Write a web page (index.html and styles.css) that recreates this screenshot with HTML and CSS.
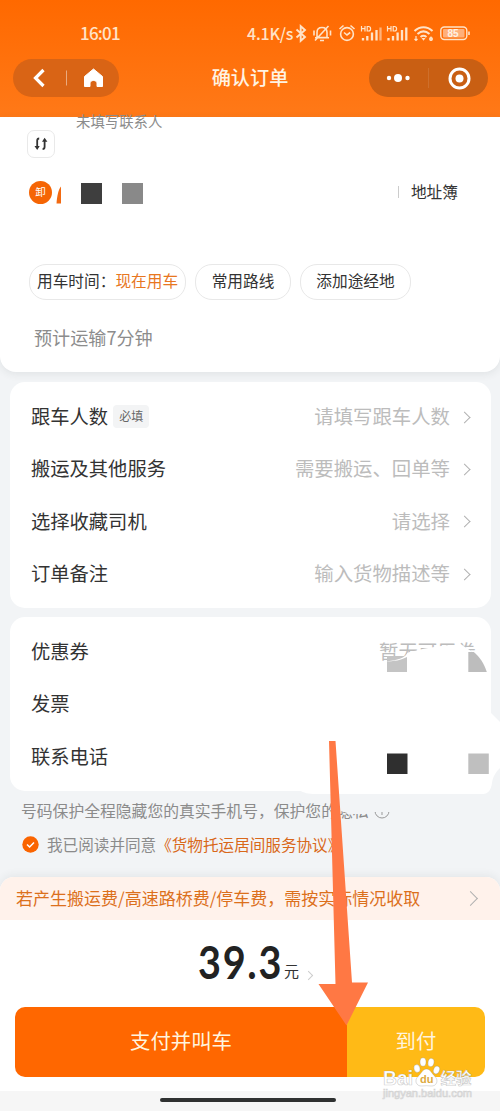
FILE: index.html
```
<!DOCTYPE html>
<html lang="zh-CN">
<head>
<meta charset="utf-8">
<title>确认订单</title>
<link rel="stylesheet" href="styles.css">
</head>
<body>
<div class="app">
  <header class="header">
    <div class="status">
      <span class="clock">16:01</span>
      <span class="speed">4.1K/s</span>
      <svg class="status-icons" width="176" height="20" viewBox="295 23 176 20" fill="none" stroke="#ffe3c8" stroke-width="1.6">
        <path stroke-width="1.900" d="M296.500 29.500 305 37l-4.300 3.800V26.200L305 30l-8.500 7.500"/>
        <path d="M317 37.500v-5c0-3 2-5 5-5s5 2 5 5v5zM315 37.800h14M320 40.500h4M328.500 26 315 40.500M314 30.500v5M330.500 30.500v5"/>
        <circle cx="347" cy="34" r="6.400"/><path d="m344 32.500 3 2.500 3.200-2.500M339.500 29l4-3.500M354.500 29l-4-3.500"/>
        <g stroke-width="2.300"><path d="M363 38v2.500M367.300 36v4.500M372 32.500v8M376.500 30v10.500"/><path stroke="#ffb27a" d="M380.500 27.500v13"/><path d="M388.500 38v2.500M393 36v4.500M397.600 32.500v8M402 30v10.500M406.300 27.500v13"/></g>
        <path stroke-width="1.200" d="M361.500 26v5.500M365 26v5.500M361.500 28.700h3.500M367.200 26.500v4.500h1.300c2.800 0 2.800-4.500 0-4.500zM387.500 26v5.500M391 26v5.500M387.500 28.700h3.500M393.200 26.500v4.500h1.300c2.800 0 2.800-4.500 0-4.500z"/>
        <path stroke-width="2" d="M414.500 31c5.500-5 12.500-5 18 0M417.500 34c3.700-3.200 8.300-3.200 12 0M420.500 37c2-1.600 4-1.600 6 0"/>
        <path fill="#ffe3c8" stroke="none" d="m421.500 38 4 0-2 2.800z"/><path stroke-width="1.200" d="M416 36v4.500M414.500 39l1.500 1.500 1.500-1.500M431 36.500v4.500"/><circle cx="431" cy="39" r="1.200"/>
        <rect x="440.800" y="27" width="26" height="12.500" rx="3.500" stroke-width="1.400"/><rect x="443" y="29" width="21.500" height="8.500" rx="1" fill="#ffb07a" stroke="none"/><path d="M469 31.500v3.500"/>
        <text class="battery-text" x="447.500" y="37">85</text>
      </svg>
    </div>
    <div class="nav">
      <div class="pill pill-left">
        <svg width="106" height="38" viewBox="13 59 106 38" fill="none" stroke="#fff">
          <path d="m43.500 70-8 8 8 8" stroke-width="3.200"/><path d="M66.500 70.500v15" stroke="#fff" opacity=".45"/>
          <path fill="#fff" stroke="#fff" stroke-linejoin="round" d="M84.500 76.500 93.500 69l9 7.500v10H97V83c0-1.500-1.500-2.500-3.500-2.500S90 81.500 90 83v3.500h-5.500z"/>
        </svg>
      </div>
      <h1 class="title">确认订单</h1>
      <div class="pill pill-right">
        <svg width="119" height="38" viewBox="369 59 119 38" fill="#fff">
          <circle cx="389" cy="78" r="2.200"/><circle cx="398" cy="78" r="4"/><circle cx="407.500" cy="78" r="2.200"/>
          <path d="M428.500 68v20" stroke="#fff" opacity=".1"/>
          <circle cx="459.500" cy="78.500" r="9.500" fill="none" stroke="#fff" stroke-width="3"/><circle cx="459.500" cy="78.500" r="4"/>
        </svg>
      </div>
    </div>
  </header>

  <section class="route">
    <p class="contact">未填写联系人</p>
    <div class="swap">
      <svg width="16" height="14" viewBox="0 0 16 14" fill="none" stroke="#333" stroke-width="1.800"><path d="M6.200 1.500c-1.400 0-2 .5-2 2v7M9.600 12c1.400 0 2-.5 2-2V3.500"/><path fill="#333" stroke="none" d="M1.500 9h5.200l-2.500 4zM9 4.700l2.600-4 2.800 4z"/></svg>
    </div>
    <div class="unload">
      <span class="unload-badge">卸</span>
      <svg width="6" height="18" viewBox="0 0 6 18"><path fill="#f26a12" d="M.5 17.500C1 11 2 4 5 .5v17z"/></svg>
      <i class="block block-dark"></i>
      <i class="block block-mid"></i>
      <span class="address-book">地址簿</span>
    </div>
    <div class="chips">
      <span class="chip chip-time">用车时间：<b>现在用车</b></span>
      <span class="chip chip-route">常用路线</span>
      <span class="chip chip-stop">添加途经地</span>
    </div>
    <p class="estimate">预计运输7分钟</p>
  </section>

  <section class="card card-options">
    <div class="row"><span>跟车人数</span><em class="tag">必填</em><span class="hint">请填写跟车人数</span><i class="chev"></i></div>
    <div class="row"><span>搬运及其他服务</span><span class="hint">需要搬运、回单等</span><i class="chev"></i></div>
    <div class="row"><span>选择收藏司机</span><span class="hint">请选择</span><i class="chev"></i></div>
    <div class="row"><span>订单备注</span><span class="hint">输入货物描述等</span><i class="chev"></i></div>
  </section>

  <section class="card card-billing">
    <div class="row"><span>优惠券</span><span class="hint hint-coupon">暂无可用券</span></div>
    <div class="row"><span>发票</span></div>
    <div class="row"><span>联系电话</span></div>
  </section>

  <p class="privacy">号码保护全程隐藏您的真实手机号，保护您的隐私
    <svg width="16" height="16" viewBox="0 0 16 16" fill="none" stroke="#999" stroke-width="1"><circle cx="8" cy="8" r="7"/><path d="M8 4v8"/></svg>
  </p>
  <div class="agree">
    <svg width="17" height="17" viewBox="0 0 17 17"><circle cx="8.500" cy="8.500" r="8.200" fill="#fa6400"/><path d="m5 8.500 2.600 2.500L12 6.500" fill="none" stroke="#fff" stroke-width="1.500"/></svg>
    <span>我已阅读并同意<b>《货物托运居间服务协议》</b></span>
  </div>

  <footer class="footer">
    <div class="notice"><span>若产生搬运费/高速路桥费/停车费，需按实际情况收取</span><i class="chev chev-notice"></i></div>
    <div class="price"><strong>39.3</strong><span>元</span><i class="chev chev-small"></i></div>
    <div class="actions"><div class="pay">支付并叫车</div><div class="cod">到付</div></div>
    <div class="gesture"><i></i></div>
  </footer>

  <svg class="overlay" width="500" height="1111" viewBox="0 0 500 1111">
    <path fill="#c4c4c4" d="M387 656h20v16h-20z"/>
    <path fill="#fff" d="M384 661.500C394 661 402 659 406 655c2-4 6-3 12-5 9-2 20-4 32-5l12 0 12 8-6 20h-61v-16c-6 3-12 4.500-23 4.500z"/>
    <path fill="#bdbdbd" d="M468.300 652h5.500c6 5 10 11 13 20h-18.500z"/>
    <path fill="#fff" d="M482 700h9v13c3 3 6 6 9 9v46c-4 4-7 8-8 15-1 7-4 11-9 11H316c-8 0-12-1-17-4l90-80z"/>
    <path fill="#2f2f2f" d="M387 753.500h20.500v20.500H387z"/>
    <path fill="#bfbfbf" d="M468.300 753.500h20.500v20.500h-20.500z"/>
    <path fill="#f2f4f6" d="M338 800h56v12h-20l-8 2h-16l-12-4z"/>
    <path fill="#ff7844" d="M329 741h6.500L352 982.500h16L346.500 1025.500 318.500 984h17z"/>
    <g class="watermark">
      <text class="wm-name" x="383" y="1085" textLength="30" lengthAdjust="spacingAndGlyphs">Bai</text>
      <ellipse cx="417" cy="1068.500" rx="3" ry="4" transform="rotate(-15 417 1068.500)"/><ellipse cx="423" cy="1062" rx="3" ry="4.200"/><ellipse cx="431" cy="1062.500" rx="3" ry="4.200" transform="rotate(12 431 1062.500)"/><ellipse cx="436.500" cy="1070" rx="3" ry="4" transform="rotate(20 436.500 1070)"/>
      <path d="M426.500 1069c4 0 5 4.500 8.500 7.500 4 4 1.500 10-4 9.500-3-.4-6-.4-9 0-6 .5-8-6-4-9.500 3.500-3 4.500-7.500 8.500-7.500z"/>
      <text class="wm-du" x="420" y="1083">du</text>
      <text class="wm-cn" x="440.500" y="1084">经验</text>
      <text class="wm-url" x="383" y="1097" textLength="89" lengthAdjust="spacingAndGlyphs">jingyan.baidu.com</text>
    </g>
  </svg>
</div>
</body>
</html>
```
FILE: styles.css
```
* { box-sizing: border-box; }
body { margin: 0; }
p, h1 { margin: 0; }
i, em { font-style: normal; }
b { font-weight: inherit; color: #d9681a; }

.app {
  position: relative;
  display: flex;
  flex-direction: column;
  width: 500px;
  height: 1111px;
  overflow: hidden;
  background: #f2f4f6;
  color: #333;
  font-family: "Noto Sans CJK SC", sans-serif;
  white-space: nowrap;
}
.header { height: 117px; flex: none; background: linear-gradient(#ff6900, #ff7918); }
.status {
  display: flex;
  align-items: center;
  height: 43px;
  padding: 23px 0 0 80px;
  color: #ffe3c8;
  font: 500 17px/20px "Noto Sans CJK SC", sans-serif;
}
.clock { width: 167px; letter-spacing: -.8px; }
.speed { width: 48px; font-size: 16px; letter-spacing: -.2px; }
.battery-text { font: bold 10px "Liberation Sans", sans-serif; fill: #fff2e4; stroke: none; }
.nav { display: flex; align-items: center; justify-content: space-between; padding: 16px 12px 0 13px; }
.pill { height: 38px; border-radius: 19px; }
.pill svg { display: block; }
.pill-left { width: 106px; background: #d96415; }
.pill-right { width: 119px; background: #c95f13; }
.title { margin: 0 0 2px 12px; color: #fff3e3; font-size: 19.200px; font-weight: 500; line-height: 36px; }

.route {
  height: 255px;
  flex: none;
  background: #fff;
  border-radius: 0 0 16px 16px;
  box-shadow: 0 2px 9px rgba(40, 50, 60, .09);
}
.contact { height: 13px; padding-left: 76px; font-size: 14.400px; line-height: 8px; color: #8b8b8b; }
.swap {
  display: flex;
  align-items: center;
  justify-content: center;
  width: 28px;
  height: 28px;
  margin-left: 27px;
  border: 1px solid #e9e9e9;
  border-radius: 7px;
}
.unload { display: flex; align-items: center; height: 28px; margin: 20px 42px 0 29px; }
.unload-badge {
  width: 23px;
  height: 23px;
  margin-right: 4px;
  border-radius: 50%;
  background: #f56505;
  color: #fff;
  font-size: 10.500px;
  line-height: 22px;
  text-align: center;
}
.unload svg { margin-top: 5px; }
.block { width: 21px; height: 21px; margin-top: 3px; }
.block-dark { margin-left: 19px; background: #3e3e3e; }
.block-mid { margin-left: 20px; background: #898989; }
.address-book { margin-left: auto; font-size: 15.700px; line-height: 24px; display: flex; align-items: center; }
.address-book::before { content: ""; width: 1px; height: 12px; margin-right: 12px; background: #ccc; }
.chips { display: flex; gap: 9px; margin: 58px 0 0 29px; }
.chip {
  height: 36px;
  border: 1px solid #e8e8e8;
  border-radius: 17px;
  font-size: 15.700px;
  line-height: 31px;
  text-align: center;
}
.chip b { color: #e8771f; }
.chip-time { width: 157px; text-align: left; padding-left: 7px; }
.chip-route { width: 96px; }
.chip-stop { width: 111px; }
.estimate { margin: 24px 0 0 34px; font-size: 18.100px; line-height: 26px; color: #8c8c8c; }

.card { flex: none; margin: 0 9px 0 10px; padding: 8px 20px 0 21px; background: #fff; border-radius: 15px; }
.card-options { height: 226px; margin-top: 10px; }
.card-billing { height: 174px; margin-top: 9px; }
.row { display: flex; align-items: center; height: 52.300px; font-size: 19.300px; line-height: 28px; }
.tag {
  height: 23px;
  margin-left: 5px;
  padding: 0 6px;
  border-radius: 4px;
  background: #f3f4f5;
  color: #666;
  font-size: 12px;
  line-height: 22px;
}
.hint { margin-left: auto; color: #bcbcbc; font-size: 19.400px; }
.hint-coupon { margin-right: -5px; }
.chev {
  width: 9px;
  height: 9px;
  margin: 2px 2px 0 10px;
  border: solid #b0b0b0;
  border-width: 1.500px 1.500px 0 0;
  transform: rotate(45deg) scale(.95);
}

.privacy { display: flex; gap: 5px; margin: 8px 0 0 21px; align-items: center; height: 24px; font-size: 15.800px; line-height: 24px; color: #8b8b8b; }
.agree { display: flex; align-items: center; gap: 8px; height: 24px; margin: 9px 0 0 22px; font-size: 15.600px; line-height: 24px; color: #8b8b8b; }

.footer { margin-top: 21px; background: #fff; border-radius: 14px 14px 0 0; box-shadow: 0 -2px 9px rgba(40, 50, 60, .07); }
.notice {
  display: flex;
  align-items: center;
  justify-content: space-between;
  height: 43px;
  padding: 0 24px 2px 16px;
  border-radius: 14px 14px 0 0;
  background: #fff2eb;
  color: #dc701c;
  font-size: 17px;
}
.chev-notice { margin: 2px 0 0; width: 11px; height: 11px; }
.price { display: flex; align-items: baseline; height: 87px; padding-left: 198px; line-height: 86px; }
.price strong {
  width: 83px;
  color: #222;
  font: bold 46px/84px Lato, sans-serif;
  letter-spacing: 2px;
  transform: scaleX(.86);
  transform-origin: left;
}
.price span { margin-left: 3px; font-size: 15px; transform: translateY(-2px); }
.chev-small { width: 7px; height: 7px; margin-left: 6px; border-color: #ccc; border-width: 1px 1px 0 0; }
.actions { display: flex; height: 70px; margin: 0 15px; border-radius: 10px; overflow: hidden; color: #fff4df; font-size: 20.400px; line-height: 67px; text-align: center; }
.pay { width: 332px; background: #ff6700; }
.cod { flex: 1; background: #ffba16; }
.gesture { height: 20px; margin-top: 14px; padding: 7px 164px 0 160px; background: #f6f6f6; }
.gesture i { display: block; height: 4px; border-radius: 2px; background: #2f3131; }

.overlay { position: absolute; left: 0; top: 0; }
.watermark { fill: #fff; stroke: rgba(130, 130, 130, .4); stroke-width: .7px; }
.wm-name { font: bold 20px "Liberation Sans", sans-serif; }
.wm-du { font: bold 11px "Liberation Sans", sans-serif; fill: #ddaa3f; stroke: none; }
.wm-cn { font: bold 15.500px "Noto Sans CJK SC", sans-serif; }
.wm-url { font: 10px "Liberation Sans", sans-serif; fill: #fff; stroke: #d4d4d4; }
```
